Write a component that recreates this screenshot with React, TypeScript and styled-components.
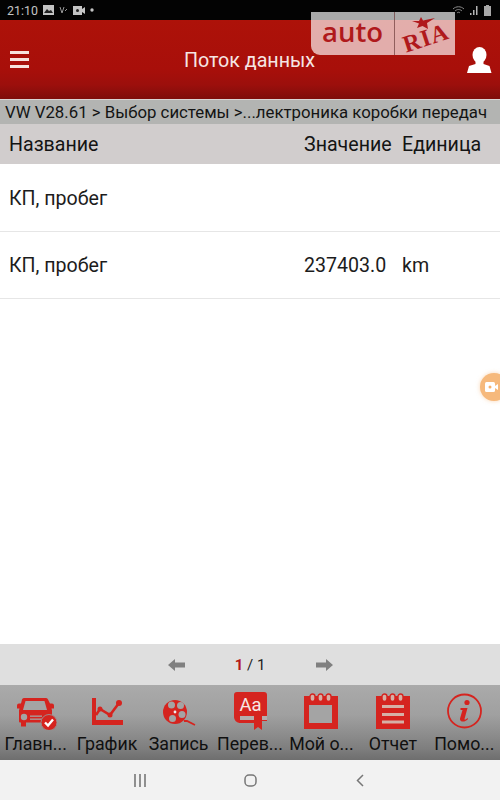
import styled, { createGlobalStyle } from 'styled-components'
import { ReactNode } from 'react'

const GlobalStyle = createGlobalStyle`
  html, body {
    margin: 0;
    padding: 0;
    background: #fff;
  }
  body {
    font-family: Roboto, "Noto Sans", "Liberation Sans", sans-serif;
  }
`

const Screen = styled.div`
  position: relative;
  width: 500px;
  height: 800px;
  overflow: hidden;
  display: flex;
  flex-direction: column;
  background: #fff;
`

const StatusBar = styled.div`
  height: 20px;
  flex: none;
  background: #030303;
  color: #c4c4c4;
  display: flex;
  align-items: center;
  justify-content: space-between;
  padding: 0 9px 0 7px;
  font-size: 12.4px;
`

const StatusGroup = styled.div`
  display: flex;
  align-items: center;
  gap: 5px;
`

const Header = styled.header`
  height: 79px;
  flex: none;
  display: flex;
  align-items: center;
  justify-content: space-between;
  padding: 0 8px 0 10px;
  background: linear-gradient(180deg, #ad1209 0%, #a80f0a 62%, #9c0f0c 82%, #7e0d0b 100%);
  color: #fff;
`

const HeaderTitle = styled.h1`
  margin: 2px 0 0 3px;
  font-size: 19.7px;
  font-weight: 400;
  color: #f6e6e4;
`

const Crumbs = styled.div`
  height: 25px;
  flex: none;
  box-sizing: border-box;
  border-top: 1px solid #d8d4d4;
  background: #b3b4b2;
  color: #141414;
  font-size: 16.8px;
  line-height: 24px;
  padding-left: 5px;
  white-space: nowrap;
  overflow: hidden;
`

const TableHead = styled.div`
  height: 40px;
  flex: none;
  display: grid;
  grid-template-columns: 295px 98px 1fr;
  align-items: center;
  padding-left: 9px;
  background: #d1cdcd;
  color: #141414;
  font-size: 19.6px;
  white-space: nowrap;
`

const Row = styled.div`
  height: 67.5px;
  flex: none;
  box-sizing: border-box;
  border-bottom: 1px solid #e6e6e6;
  display: grid;
  grid-template-columns: 295px 98px 1fr;
  align-items: center;
  padding: 2px 0 0 9px;
  color: #1c1c1c;
  font-size: 19.6px;
`

const Spacer = styled.div`
  flex: 1;
`

const Pager = styled.div`
  height: 41px;
  flex: none;
  display: flex;
  align-items: center;
  justify-content: center;
  background: #dfdfdf;
  font-size: 15px;
  color: #222;
`

const PageText = styled.div`
  width: 131px;
  text-align: center;
`

const CurrentPage = styled.span`
  color: #b5191a;
  font-weight: 700;
`

const TabBar = styled.nav`
  height: 75px;
  flex: none;
  display: grid;
  grid-template-columns: repeat(7, 1fr);
  background: linear-gradient(180deg, #aaaaaa 0%, #a0a0a0 40%, #7e7e7e 85%, #6e6e6e 100%);
`

const Tab = styled.div`
  min-width: 0;
  display: flex;
  flex-direction: column;
  align-items: center;
  padding-top: 6px;
  color: #101010;
  font-size: 17.8px;
  line-height: 21px;
  white-space: nowrap;
`

const TabIcon = styled.div`
  width: 44px;
  height: 40px;
  margin-bottom: 2px;
  display: flex;
  align-items: center;
  justify-content: center;
`

const NavBar = styled.div`
  height: 40px;
  flex: none;
  display: grid;
  grid-template-columns: repeat(3, 110px);
  justify-content: center;
  justify-items: center;
  align-items: center;
  background: #f2f2f2;
`

const Watermark = styled.div`
  position: absolute;
  left: 311px;
  top: 12px;
  width: 144px;
  height: 43px;
  display: flex;
  border-radius: 0 0 0 9px;
  background: rgba(255, 255, 255, 0.66);
`

const WatermarkAuto = styled.div`
  width: 84px;
  box-sizing: border-box;
  border-right: 1px solid rgba(110, 60, 60, 0.7);
  padding-left: 11px;
  color: #b0191c;
  font-family: "Open Sans", "Noto Sans", sans-serif;
  font-size: 27.5px;
  font-weight: 600;
  line-height: 40px;
`

const WatermarkRia = styled.div`
  flex: 1;
  display: flex;
  align-items: center;
  justify-content: center;
  position: relative;
`

const RiaText = styled.span`
  color: #b0191c;
  font-family: "Liberation Serif", serif;
  font-size: 24px;
  font-weight: 700;
  letter-spacing: 1px;
  transform: rotate(-18deg) translateY(5px);
`

const RiaStar = styled.svg`
  position: absolute;
  left: 16px;
  top: 5px;
`

const RecordBubble = styled.div`
  position: absolute;
  left: 480px;
  top: 373px;
  width: 28px;
  height: 28px;
  border-radius: 50%;
  background: #f6b97c;
  box-shadow: 0 0 4px rgba(246, 176, 108, 0.5);
  display: flex;
  align-items: center;
  padding-left: 5px;
  box-sizing: border-box;
`

const RED = '#d5241f'
const BAR_GREY = '#a4a4a4'
const PAGE_TINT = '#d6b0a6'

const CarIcon = () => (
  <svg width="42" height="38" viewBox="0 0 42 38">
    <path
      d="M9 6h22a2 2 0 0 1 2 1.500l2 4h2a2 2 0 0 1 2 2v3h-2.500l.5 2v11a1 1 0 0 1-1 1h-1v4h-5v-4H11v4H6v-4H5a1 1 0 0 1-1-1V18.500l.5-2H2v-3a2 2 0 0 1 2-2h2l1-4A2 2 0 0 1 9 6z"
      fill={RED}
    />
    <path d="M10.500 9h19l2.500 9H8z" fill={BAR_GREY} />
    <circle cx="9" cy="25" r="3.200" fill={BAR_GREY} />
    <rect x="15" y="23.500" width="12" height="1.300" fill={BAR_GREY} />
    <rect x="15" y="26.500" width="12" height="1.300" fill={BAR_GREY} />
    <circle cx="34" cy="30.500" r="8" fill={RED} stroke="#a08a8a" strokeWidth="1" />
    <path d="M30 30.500l3 3 5-6" fill="none" stroke="#fff" strokeWidth="2.400" />
  </svg>
)

const ChartIcon = () => (
  <svg width="34" height="30" viewBox="0 0 34 30">
    <path d="M2 2h4v22h27v5H2z" fill={RED} />
    <path d="M6 19l4-6 10 6 9-12" fill="none" stroke={RED} strokeWidth="2.600" />
    <circle cx="10" cy="13" r="2.500" fill={RED} />
    <circle cx="20" cy="19" r="2.500" fill={RED} />
    <circle cx="29" cy="7" r="3" fill={RED} />
  </svg>
)

const ReelIcon = () => (
  <svg width="36" height="32" viewBox="0 0 36 32">
    <circle cx="14" cy="17" r="12" fill={RED} />
    <circle cx="10.500" cy="10" r="3.500" fill={BAR_GREY} />
    <circle cx="19.500" cy="10.500" r="3.500" fill={BAR_GREY} />
    <circle cx="21" cy="19.500" r="3.500" fill={BAR_GREY} />
    <circle cx="11.500" cy="23.500" r="3.500" fill={BAR_GREY} />
    <circle cx="14" cy="17" r="1.400" fill="#eee" />
    <path d="M23 26l3 0 8 4" fill="none" stroke={RED} strokeWidth="1.800" />
  </svg>
)

const TranslateIcon = () => (
  <svg width="34" height="38" viewBox="0 0 34 38">
    <path d="M4 0h27a3 3 0 0 1 3 3v26H7a6 6 0 0 1-6-6V3a3 3 0 0 1 3-3z" fill={RED} />
    <path d="M7 24h27v4H7z" fill="#b4aeae" />
    <path d="M1 21c1 2 3 3 6 3v7a6 6 0 0 1-6-6z" fill={RED} />
    <path d="M6 28h16v3H6z" fill={RED} />
    <path d="M21 24h8v14l-4-3-4 3z" fill={RED} />
    <text x="17.500" y="18.700" textAnchor="middle" fontSize="18.500" fill="#f7e6e4" fontFamily="Roboto, sans-serif">Aa</text>
  </svg>
)

const CalendarIcon = ({ lines }: { lines?: boolean }) => (
  <svg width="34" height="36" viewBox="0 0 34 36">
    <rect x="0" y="3" width="34" height="33" fill={RED} />
    {[8.500, 16.500, 24.500].map(x => (
      <rect key={x} x={x - 2.500} y="1" width="5" height="7.500" rx="2.500" fill={PAGE_TINT} stroke={RED} strokeWidth="1.400" />
    ))}
    {lines ? (
      [12, 20, 27.500].map(y => <rect key={y} x="6" y={y} width="22" height="3" fill={PAGE_TINT} />)
    ) : (
      <rect x="5" y="12" width="23" height="18" fill={BAR_GREY} />
    )}
  </svg>
)

const InfoIcon = () => (
  <svg width="36" height="36" viewBox="0 0 36 36">
    <circle cx="18.500" cy="18" r="16.500" fill="none" stroke={RED} strokeWidth="1.800" />
    <circle cx="21" cy="9.500" r="2.600" fill={RED} />
    <path d="M14.500 15h7l-3 11c0 1 1 1 3-1l.5 1c-2 3-8.500 4-8-.5l2.500-8.500h-2z" fill={RED} />
  </svg>
)

const UserIcon = () => (
  <svg width="25" height="26" viewBox="0 0 25 26">
    <ellipse cx="12.500" cy="8" rx="7" ry="8" fill="#fff" />
    <path d="M8.500 14h8v3l6 2 2 7H0l2-7 6.500-2z" fill="#fff" />
  </svg>
)

const MenuIcon = () => (
  <svg width="19" height="19" viewBox="0 0 19 19">
    {[1, 8, 15].map(y => <rect key={y} x="0" y={y} width="19" height="3" fill="#f7e2dd" />)}
  </svg>
)

const ArrowIcon = ({ flip }: { flip?: boolean }) => (
  <svg width="17" height="12" viewBox="0 0 17 12" style={flip ? { transform: 'scaleX(-1)' } : undefined}>
    <path d="M0 6l7-6v3.600h10v4.800H7V12z" fill="#808080" />
  </svg>
)

const tabs: { label: string; icon: ReactNode }[] = [
  { label: 'Главн...', icon: <CarIcon /> },
  { label: 'График', icon: <ChartIcon /> },
  { label: 'Запись', icon: <ReelIcon /> },
  { label: 'Перев...', icon: <TranslateIcon /> },
  { label: 'Мой о...', icon: <CalendarIcon /> },
  { label: 'Отчет', icon: <CalendarIcon lines /> },
  { label: 'Помо...', icon: <InfoIcon /> },
]

export default function App() {
  return (
    <Screen>
      <GlobalStyle />
      <StatusBar>
        <StatusGroup>
          <span>21:10</span>
          <svg width="11" height="10" viewBox="0 0 11 10">
            <rect width="11" height="10" fill="#c4c4c4" />
            <path d="M1 8l3-4 2 2 2-1 2 3z" fill="#222" />
          </svg>
          <svg width="9" height="9" viewBox="0 0 9 9">
            <path d="M1 1l2 6 2-6M6 5l2-2" fill="none" stroke="#999" strokeWidth="1" />
          </svg>
          <svg width="12" height="9" viewBox="0 0 12 9">
            <rect width="9" height="9" fill="#c4c4c4" />
            <path d="M9 3l3-2v7l-3-2z" fill="#c4c4c4" />
            <circle cx="4.500" cy="4.500" r="1.500" fill="#222" />
          </svg>
          <svg width="4" height="4" viewBox="0 0 4 4">
            <circle cx="2" cy="2" r="1.700" fill="#c4c4c4" />
          </svg>
        </StatusGroup>
        <StatusGroup>
          <svg width="13" height="10" viewBox="0 0 13 10">
            <path d="M1 4c3-3 8-3 11 0M3 6c2-2 5-2 7 0M5 8c1-1 2-1 3 0" fill="none" stroke="#8a8a8a" strokeWidth="1" />
          </svg>
          <svg width="9" height="10" viewBox="0 0 9 10">
            <path d="M0 8h1.500v2H0zM3 5h1.500v5H3zM6 1h1.500v9H6z" fill="#b4b4b4" />
          </svg>
          <svg width="7" height="11" viewBox="0 0 7 11">
            <path d="M2 0h3v1h2v10H0V1h2z" fill="#a8a8a8" />
          </svg>
        </StatusGroup>
      </StatusBar>

      <Header>
        <MenuIcon />
        <HeaderTitle>Поток данных</HeaderTitle>
        <UserIcon />
      </Header>

      <Crumbs>VW V28.61 &gt; Выбор системы &gt;...лектроника коробки передач</Crumbs>

      <TableHead>
        <span>Название</span>
        <span>Значение</span>
        <span>Единица</span>
      </TableHead>

      <Row>
        <span>КП, пробег</span>
      </Row>
      <Row>
        <span>КП, пробег</span>
        <span>237403.0</span>
        <span>km</span>
      </Row>

      <Spacer />

      <Pager>
        <ArrowIcon />
        <PageText>
          <CurrentPage>1</CurrentPage> / 1
        </PageText>
        <ArrowIcon flip />
      </Pager>

      <TabBar>
        {tabs.map(tab => (
          <Tab key={tab.label}>
            <TabIcon>{tab.icon}</TabIcon>
            <span>{tab.label}</span>
          </Tab>
        ))}
      </TabBar>

      <NavBar>
        <svg width="14" height="13" viewBox="0 0 14 13">
          <path d="M2 0v13M7 0v13M12 0v13" stroke="#777" strokeWidth="1.6" />
        </svg>
        <svg width="13" height="13" viewBox="0 0 13 13">
          <rect x="1" y="1" width="11" height="11" rx="4" fill="none" stroke="#777" strokeWidth="1.5" />
        </svg>
        <svg width="8" height="13" viewBox="0 0 8 13">
          <path d="M7 1L1.500 6.500 7 12" fill="none" stroke="#777" strokeWidth="1.5" />
        </svg>
      </NavBar>

      <Watermark>
        <WatermarkAuto>auto</WatermarkAuto>
        <WatermarkRia>
          <RiaStar width="24" height="12" viewBox="0 0 24 12">
            <path d="M10 0l2 3.500 12-2.500-8 5 1 6-5.500-3L6 11l2-4.500L1 4l7 0z" fill="#b0191c" />
          </RiaStar>
          <RiaText>RIA</RiaText>
        </WatermarkRia>
      </Watermark>

      <RecordBubble>
        <svg width="13" height="10" viewBox="0 0 13 10">
          <rect width="10" height="10" rx="1.5" fill="#fff" />
          <path d="M10 4l3-2v6l-3-2z" fill="#fff" />
          <circle cx="5" cy="5" r="1.5" fill="#f6b06c" />
        </svg>
      </RecordBubble>
    </Screen>
  )
}
